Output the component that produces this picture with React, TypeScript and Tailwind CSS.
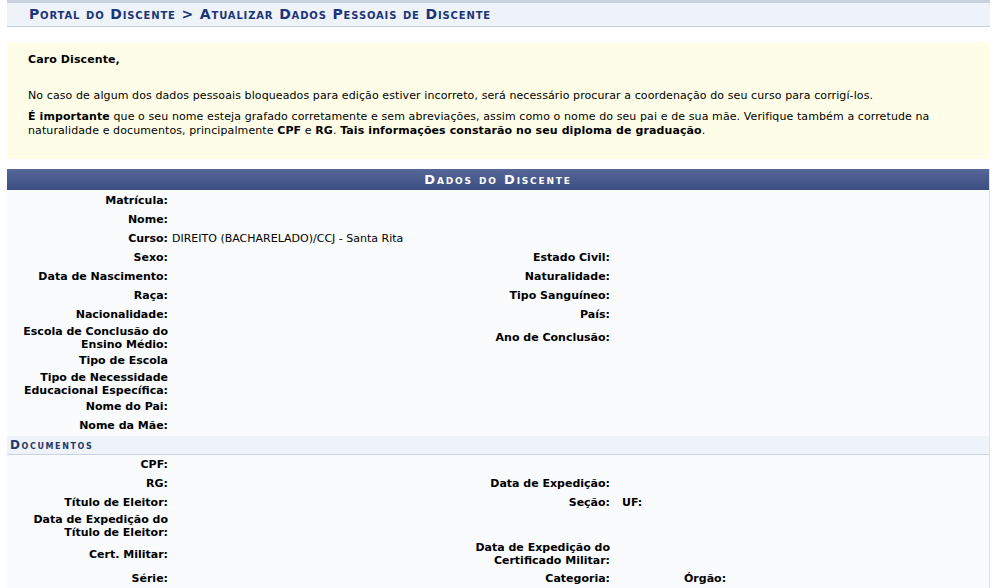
import React from "react";

type Cell = { label?: React.ReactNode; value?: React.ReactNode };

function Label(props: { children?: React.ReactNode }) {
  return (
    <div className="text-right font-bold pr-[4px] leading-[13px] whitespace-nowrap">
      {props.children}
    </div>
  );
}

function Row(props: { h: string; left: Cell; right?: Cell }) {
  const { h, left, right } = props;
  return (
    <div className={`grid grid-cols-[165px_302px_140px_1fr] items-center ${h}`}>
      <Label>{left.label}</Label>
      <div className="leading-[13px] whitespace-nowrap">{left.value}</div>
      <Label>{right?.label}</Label>
      <div className="leading-[13px] whitespace-nowrap">{right?.value}</div>
    </div>
  );
}

const H1 = "h-[19px]";
const H2 = "h-[27px]";

export default function App() {
  return (
    <div className="min-h-screen bg-white pl-[7px] pr-[8px] text-[11px] text-black font-['DejaVu_Sans',sans-serif]">
      <div className="h-[27px] border-t-[3px] border-b border-t-[#c9d1de] border-b-[#c3cddd] bg-[#eef2f9] flex items-center pl-[22px]">
        <h2 className="text-[14px] font-bold [font-variant:small-caps] text-[#1b3576] tracking-[0.85px]">
          Portal do Discente &gt; Atualizar Dados Pessoais de Discente
        </h2>
      </div>

      <div className="mt-[15px] bg-[#fefee8] px-[21px] pt-[11px] pb-[21px] leading-[14px] tracking-[0.1px]">
        <p className="font-bold">Caro Discente,</p>
        <p className="mt-[22px]">
          No caso de algum dos dados pessoais bloqueados para edição estiver incorreto, será
          necessário procurar a coordenação do seu curso para corrigí-los.
        </p>
        <p className="mt-[7px]">
          <b>É importante</b> que o seu nome esteja grafado corretamente e sem abreviações, assim
          como o nome do seu pai e de sua mãe. Verifique também a corretude na
          <br />
          naturalidade e documentos, principalmente <b>CPF</b> e <b>RG</b>.{" "}
          <b>Tais informações constarão no seu diploma de graduação</b>.
        </p>
      </div>

      <div className="mt-[10px] border-r border-[#dde3ec] bg-[#f9fbfd]">
        <div className="h-[21px] bg-gradient-to-b from-[#56689a] to-[#3c4d80] flex items-center justify-center">
          <span className="text-white font-bold text-[13px] [font-variant:small-caps] tracking-[1.8px]">
            Dados do Discente
          </span>
        </div>

        <div className="pt-[1px]">
          <Row h={H1} left={{ label: "Matrícula:" }} />
          <Row h={H1} left={{ label: "Nome:" }} />
          <Row h={H1} left={{ label: "Curso:", value: "DIREITO (BACHARELADO)/CCJ - Santa Rita" }} />
          <Row h={H1} left={{ label: "Sexo:" }} right={{ label: "Estado Civil:" }} />
          <Row h={H1} left={{ label: "Data de Nascimento:" }} right={{ label: "Naturalidade:" }} />
          <Row h={H1} left={{ label: "Raça:" }} right={{ label: "Tipo Sanguíneo:" }} />
          <Row h={H1} left={{ label: "Nacionalidade:" }} right={{ label: "País:" }} />
          <Row
            h={H2}
            left={{ label: <>Escola de Conclusão do<br />Ensino Médio:</> }}
            right={{ label: "Ano de Conclusão:" }}
          />
          <Row h={H1} left={{ label: "Tipo de Escola" }} />
          <Row h={H2} left={{ label: <>Tipo de Necessidade<br />Educacional Específica:</> }} />
          <Row h={H1} left={{ label: "Nome do Pai:" }} />
          <Row h={H1} left={{ label: "Nome da Mãe:" }} />
        </div>

        <div className="mt-[1px] h-[19px] bg-[#eef2f9] border-b border-[#c6d2e6] flex items-center pl-[3px]">
          <span className="font-bold text-[12px] [font-variant:small-caps] tracking-[1.6px] text-[#24386c]">
            Documentos
          </span>
        </div>

        <Row h={H1} left={{ label: "CPF:" }} />
        <Row h={H1} left={{ label: "RG:" }} right={{ label: "Data de Expedição:" }} />
        <Row
          h={H1}
          left={{ label: "Título de Eleitor:" }}
          right={{ label: "Seção:", value: <b className="pl-[8px]">UF:</b> }}
        />
        <Row h={H2} left={{ label: <>Data de Expedição do<br />Título de Eleitor:</> }} />
        <Row
          h="h-[30px]"
          left={{ label: "Cert. Militar:" }}
          right={{ label: <>Data de Expedição do<br />Certificado Militar:</> }}
        />
        <Row
          h={H1}
          left={{ label: "Série:" }}
          right={{ label: "Categoria:", value: <b className="pl-[70px]">Órgão:</b> }}
        />
      </div>
    </div>
  );
}
